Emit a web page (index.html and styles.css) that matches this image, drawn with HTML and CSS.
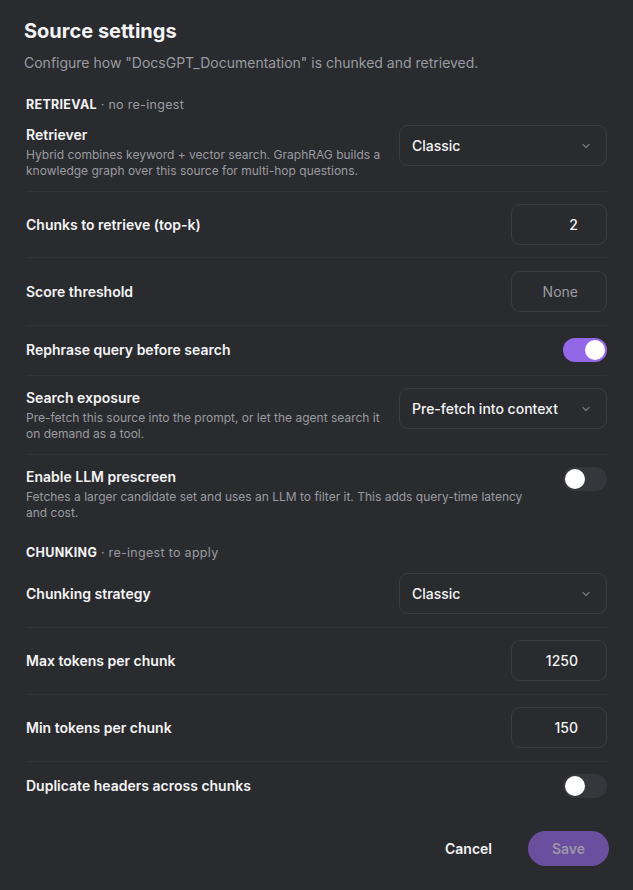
FILE: index.html
```html
<!DOCTYPE html>
<html lang="en">
<head>
  <meta charset="UTF-8">
  <meta name="viewport" content="width=device-width, initial-scale=1.0">
  <title>Source settings</title>
  <link rel="stylesheet" href="styles.css">
</head>
<body>
  <div class="modal">
    <h2 class="title">Source settings</h2>
    <p class="subtitle">Configure how "DocsGPT_Documentation" is chunked and retrieved.</p>

    <div class="section-head"><strong>RETRIEVAL</strong> · no re-ingest</div>

    <div class="row row-top">
      <div class="info">
        <div class="label">Retriever</div>
        <div class="desc">Hybrid combines keyword + vector search. GraphRAG builds a knowledge graph over this source for multi-hop questions.</div>
      </div>
      <div class="select">
        <span>Classic</span>
        <svg class="chev" width="12" height="12" viewBox="0 0 12 12"><path d="M3 4.5 6 7.5 9 4.5" fill="none" stroke="currentColor" stroke-width="1.2" stroke-linecap="round" stroke-linejoin="round"/></svg>
      </div>
    </div>

    <div class="row">
      <div class="info"><div class="label">Chunks to retrieve (top-k)</div></div>
      <div class="num">2</div>
    </div>

    <div class="row row-tall">
      <div class="info"><div class="label">Score threshold</div></div>
      <div class="num placeholder">None</div>
    </div>

    <div class="row row-toggle">
      <div class="info"><div class="label">Rephrase query before search</div></div>
      <div class="toggle on"><span class="knob"></span></div>
    </div>

    <div class="row row-top">
      <div class="info">
        <div class="label">Search exposure</div>
        <div class="desc">Pre-fetch this source into the prompt, or let the agent search it on demand as a tool.</div>
      </div>
      <div class="select">
        <span>Pre-fetch into context</span>
        <svg class="chev" width="12" height="12" viewBox="0 0 12 12"><path d="M3 4.5 6 7.5 9 4.5" fill="none" stroke="currentColor" stroke-width="1.2" stroke-linecap="round" stroke-linejoin="round"/></svg>
      </div>
    </div>

    <div class="row row-top last">
      <div class="info">
        <div class="label">Enable LLM prescreen</div>
        <div class="desc narrow">Fetches a larger candidate set and uses an LLM to filter it. This adds query-time latency and cost.</div>
      </div>
      <div class="toggle"><span class="knob"></span></div>
    </div>

    <div class="section-head chunk-head"><strong>CHUNKING</strong> · re-ingest to apply</div>

    <div class="row row-chunk">
      <div class="info"><div class="label">Chunking strategy</div></div>
      <div class="select">
        <span>Classic</span>
        <svg class="chev" width="12" height="12" viewBox="0 0 12 12"><path d="M3 4.5 6 7.5 9 4.5" fill="none" stroke="currentColor" stroke-width="1.2" stroke-linecap="round" stroke-linejoin="round"/></svg>
      </div>
    </div>

    <div class="row row-chunk">
      <div class="info"><div class="label">Max tokens per chunk</div></div>
      <div class="num">1250</div>
    </div>

    <div class="row row-chunk">
      <div class="info"><div class="label">Min tokens per chunk</div></div>
      <div class="num">150</div>
    </div>

    <div class="row last">
      <div class="info"><div class="label">Duplicate headers across chunks</div></div>
      <div class="toggle"><span class="knob"></span></div>
    </div>

    <div class="actions">
      <button class="btn-cancel">Cancel</button>
      <button class="btn-save" disabled>Save</button>
    </div>
  </div>
</body>
</html>
```

FILE: styles.css
```css
:root {
  --bg: #2a2b2f;
  --border: #3b3c41;
  --divider: #323338;
  --text: #f4f4f5;
  --muted: #9a9ba1;
  --accent: #9466e8;
}

* {
  box-sizing: border-box;
}

body {
  margin: 0;
  background: var(--bg);
  color: var(--text);
  font-family: Inter, "Noto Sans", sans-serif;
}

.modal {
  padding: 17px 26px 24px 26px;
}

.title {
  margin: 0 0 0 -2px;
  font-size: 20px;
  font-weight: 700;
  line-height: 28px;
}

.subtitle {
  margin: 8px 0 0 -2px;
  font-size: 14px;
  line-height: 20px;
  color: var(--muted);
}

.section-head {
  margin-top: 23px;
  font-size: 12.5px;
  line-height: 17px;
  letter-spacing: 0.3px;
  color: var(--muted);
}

.section-head strong {
  color: var(--text);
  font-weight: 700;
}

.chunk-head {
  margin-top: 11px;
}

.row {
  display: flex;
  align-items: center;
  justify-content: space-between;
  gap: 12px;
  padding: 12px 0;
  border-bottom: 1px solid var(--divider);
}

.row-tall {
  padding: 13px 0;
}

.row-toggle {
  padding: 12px 0 13px 0;
}

.row-chunk {
  padding: 12px 0 13px 0;
}

.row-top {
  align-items: flex-start;
}

.last {
  border-bottom: none;
}

.info {
  flex: 1;
  min-width: 0;
}

.label {
  font-size: 14px;
  font-weight: 600;
  line-height: 20px;
}

.desc {
  font-size: 12px;
  line-height: 16px;
  color: var(--muted);
  margin-top: 2px;
}

.desc.narrow {
  max-width: 505px;
}

.select {
  width: 208px;
  height: 41px;
  flex-shrink: 0;
  border: 1px solid var(--border);
  border-radius: 9px;
  display: flex;
  align-items: center;
  justify-content: space-between;
  padding: 0 14px 0 12px;
  font-size: 14px;
  font-weight: 500;
}

.chev {
  color: #74757b;
}

.num {
  width: 96px;
  height: 41px;
  flex-shrink: 0;
  border: 1px solid var(--border);
  border-radius: 9px;
  display: flex;
  align-items: center;
  justify-content: flex-end;
  padding-right: 28px;
  font-size: 14px;
  font-weight: 500;
}

.num.placeholder {
  color: var(--muted);
  font-weight: 400;
}

.toggle {
  width: 44px;
  height: 24px;
  flex-shrink: 0;
  border-radius: 12px;
  background: #36373c;
  position: relative;
}

.toggle .knob {
  position: absolute;
  top: 2px;
  left: 2px;
  width: 20px;
  height: 20px;
  border-radius: 50%;
  background: #fff;
}

.toggle.on {
  background: var(--accent);
}

.toggle.on .knob {
  left: 22px;
}

.actions {
  display: flex;
  justify-content: flex-end;
  align-items: center;
  gap: 36px;
  margin-top: 21px;
  margin-right: -2px;
}

.actions button {
  font-family: inherit;
  font-size: 14px;
  font-weight: 600;
  border: none;
  cursor: pointer;
}

.btn-cancel {
  background: none;
  color: var(--text);
  padding: 0;
}

.btn-save {
  width: 81px;
  height: 35px;
  border-radius: 18px;
  background: #6a4f9e;
  color: #9d96a9;
}
```
